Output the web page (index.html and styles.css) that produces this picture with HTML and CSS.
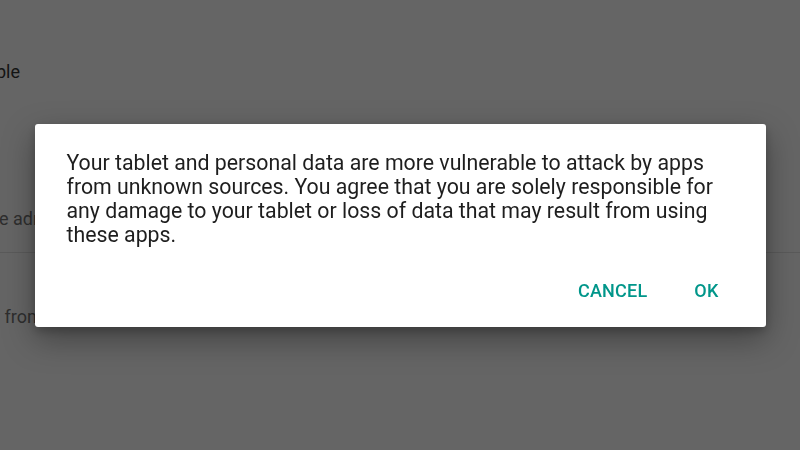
FILE: index.html
```html
<!DOCTYPE html>
<html>
<head>
<meta charset="utf-8">
<link rel="stylesheet" href="styles.css">
</head>
<body>
<div class="page">
  <div class="row row-title"><span class="title">ble</span></div>
  <div class="row row-sub"><span class="sub">e adr</span></div>
  <div class="divider"></div>
  <div class="row row-sub2"><span class="sub">&nbsp;from</span></div>
</div>
<div class="overlay">
  <div class="dialog">
    <p class="message">Your tablet and personal data are more vulnerable to attack by apps from unknown sources. You agree that you are solely responsible for any damage to your tablet or loss of data that may result from using these apps.</p>
    <div class="actions">
      <button class="btn">CANCEL</button>
      <button class="btn">OK</button>
    </div>
  </div>
</div>
</body>
</html>
```
FILE: styles.css
```css
html, body {
  margin: 0;
  padding: 0;
  width: 800px;
  height: 450px;
  overflow: hidden;
  background: #656565;
  font-family: Roboto, "Noto Sans", sans-serif;
}
.page {
  display: flex;
  flex-direction: column;
  width: 800px;
  height: 450px;
}
.row {
  white-space: nowrap;
  line-height: 21px;
  height: 21px;
  font-size: 18px;
}
.row-title {
  padding-top: 61px;
  margin-left: -4px;
}
.title {
  color: #141414;
}
.row-sub {
  padding-top: 126px;
  margin-left: -1px;
}
.sub {
  color: #2e2e2e;
}
.divider {
  margin-top: 23px;
  height: 1px;
  background: #5a5a5a;
}
.row-sub2 {
  padding-top: 53px;
}
.overlay {
  position: fixed;
  inset: 0;
  display: flex;
  align-items: center;
  justify-content: center;
}
.dialog {
  width: 731px;
  height: 203px;
  box-sizing: border-box;
  background: #ffffff;
  border-radius: 3px;
  box-shadow: 0 12px 32px rgba(0, 0, 0, 0.35), 0 4px 10px rgba(0, 0, 0, 0.2);
  padding: 27px 40px 0 32px;
  display: flex;
  flex-direction: column;
}
.message {
  margin: 0;
  font-size: 21.3px;
  line-height: 24.3px;
  color: #1e1e1e;
}
.actions {
  margin-top: auto;
  margin-bottom: 20px;
  margin-right: -40px;
  display: flex;
  justify-content: flex-end;
  gap: 15px;
  padding-right: 31px;
}
.btn {
  border: none;
  background: transparent;
  font-family: Roboto, "Noto Sans", sans-serif;
  font-weight: 500;
  font-size: 18px;
  color: #00968a;
  padding: 6px 16px;
  letter-spacing: 0.2px;
}
```
